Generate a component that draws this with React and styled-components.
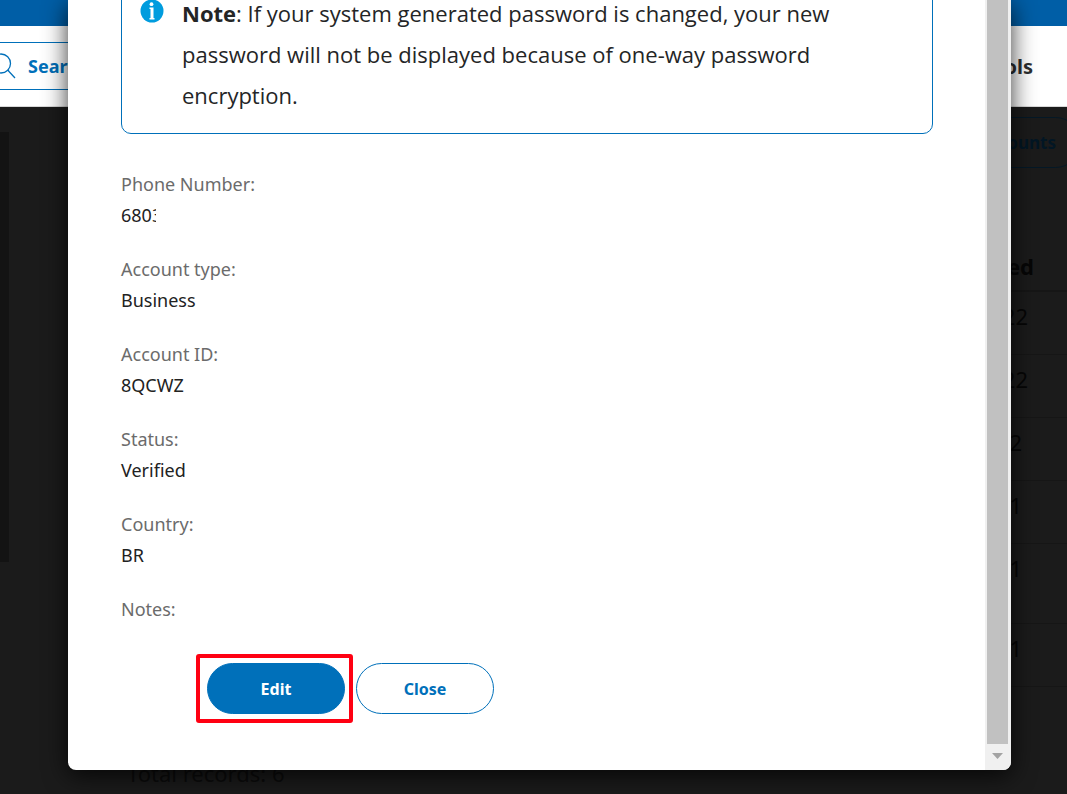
import React from "react";
import styled, { createGlobalStyle } from "styled-components";

const GlobalStyle = createGlobalStyle`
  *, *::before, *::after { box-sizing: border-box; }
  body { margin: 0; background: #1b1b1b; font-family: "Noto Sans", "Open Sans", sans-serif; color: #2c2e2f; }
  button, input { font-family: inherit; }
`;

const Page = styled.div`
  position: relative;
  min-height: 100vh;
  overflow: hidden;
  display: flex;
  flex-direction: column;
`;

const TopBar = styled.div`
  height: 26px;
  background: #005ea6;
`;

const NavBar = styled.header`
  display: flex;
  align-items: center;
  justify-content: space-between;
  height: 81px;
  padding-right: 34px;
  background: #fff;
  border-bottom: 1px solid #d8d8d8;
`;

const SearchBox = styled.label`
  display: flex;
  align-items: center;
  gap: 12px;
  width: 280px;
  height: 48px;
  border: 1px solid #0070ba;
  border-width: 1px 0;
`;

const SearchIcon = styled.svg`
  width: 28px;
  height: 28px;
  margin-left: -12px;
`;

const SearchInput = styled.input`
  flex: 1;
  min-width: 0;
  padding: 0;
  border: 0;
  background: none;
  font-size: 18px;
  font-weight: 700;
  color: #0070ba;
  &::placeholder { color: #0070ba; opacity: 1; }
`;

const NavLink = styled.a`
  font-size: 20px;
  font-weight: 700;
  color: #2c2e2f;
  text-decoration: none;
`;

const Backdrop = styled.main`
  flex: 1;
  display: flex;
  background: #1b1b1b;
`;

const SidePanel = styled.aside`
  width: 9px;
  height: 430px;
  margin-top: 25px;
  background: #131313;
`;

const Records = styled.section`
  flex: 1;
  display: flex;
  flex-direction: column;
  padding-left: 118px;
`;

const AccountsButton = styled.button`
  align-self: flex-end;
  height: 51px;
  margin: 10px -14px 73px 0;
  padding: 0 24px;
  border: 1px solid #041826;
  border-radius: 26px;
  background: none;
  font-size: 17px;
  font-weight: 700;
  color: #021624;
`;

const RecordTable = styled.table`
  width: 100%;
  border-collapse: collapse;
  font-size: 22px;
  color: #060606;
`;

const HeadCell = styled.th`
  height: 50px;
  padding: 0 33px 0 0;
  border-bottom: 2px solid #161616;
  text-align: right;
`;

const RecordCell = styled.td`
  height: ${(p) => (p.$tall ? 80 : 63)}px;
  padding: 8px ${(p) => (p.$inset ? 45 : 39)}px 0 0;
  border-bottom: 1px solid #161616;
  text-align: right;
  vertical-align: top;
  line-height: 32px;
`;

const Total = styled.p`
  margin: 70px 0 0;
  font-size: 22px;
  line-height: 32px;
  color: #0c0c0c;
`;

const ModalLayer = styled.div`
  position: absolute;
  inset: 0 0 auto;
  padding: 0 56px 24px 68px;
`;

const Modal = styled.div`
  display: flex;
  border-radius: 0 0 8px 8px;
  background: #fff;
  box-shadow: 0 5px 24px rgba(0, 0, 0, 0.8);
  overflow: hidden;
`;

const ModalContent = styled.div`
  flex: 1;
  padding: 0 52px 47px 53px;
`;

const Notice = styled.div`
  display: flex;
  gap: 18px;
  margin-top: -40px;
  padding: 32px 90px 17px 18px;
  border: 1px solid #0070ba;
  border-radius: 10px;
`;

const InfoIcon = styled.svg`
  flex: none;
  width: 24px;
  height: 24px;
  margin-top: 6px;
`;

const NoticeText = styled.p`
  margin: 0;
  font-family: "Open Sans", "Noto Sans", sans-serif;
  font-size: 22px;
  line-height: 41px;
  color: #242526;
`;

const FieldList = styled.dl`
  display: flex;
  flex-direction: column;
  gap: 23px;
  margin: 35px 0 29px;
  font-size: 18px;
  line-height: 31px;
`;

const FieldLabel = styled.dt`
  color: #6b6b6b;
`;

const FieldValue = styled.dd`
  margin: 0;
  color: #222;
`;

const ClippedValue = styled.span`
  display: block;
  width: 35px;
  overflow: hidden;
`;

const Actions = styled.div`
  display: flex;
  align-items: center;
  gap: 3px;
  padding-left: 75px;
`;

const Highlight = styled.div`
  padding: 5px 4px 5px 7px;
  border: 4px solid #ff0012;
  border-radius: 3px;
`;

const ActionButton = styled.button`
  display: block;
  width: 138px;
  height: 51px;
  padding: 0;
  border: 1px solid #0070ba;
  border-radius: 26px;
  background: ${(p) => (p.$primary ? "#0070ba" : "#fff")};
  color: ${(p) => (p.$primary ? "#fff" : "#0070ba")};
  font-size: 16px;
  font-weight: 700;
`;

const ScrollTrack = styled.div`
  display: flex;
  flex-direction: column;
  width: 26px;
  padding: 0 3px 0 2px;
  background: #f0f0f0;
`;

const ScrollThumb = styled.div`
  flex: 1;
  background: #c1c1c1;
`;

const ScrollArrow = styled.svg`
  width: 21px;
  height: 26px;
`;

const fields = [
  { label: "Phone Number:", value: "6803", clipped: true },
  { label: "Account type:", value: "Business" },
  { label: "Account ID:", value: "8QCWZ" },
  { label: "Status:", value: "Verified" },
  { label: "Country:", value: "BR" },
  { label: "Notes:" },
];

const records = [
  { date: "22" },
  { date: "22" },
  { date: "2", inset: true },
  { date: "1", inset: true },
  { date: "1", inset: true, tall: true },
  { date: "1", inset: true },
];

export default function App() {
  return (
    <Page>
      <GlobalStyle />
      <TopBar />
      <NavBar>
        <SearchBox>
          <SearchIcon viewBox="0 0 28 28" fill="none" stroke="#0070ba" strokeWidth="1.3" aria-hidden="true">
            <circle cx="13" cy="11.500" r="9.5" />
            <path d="M20.500 17.500v1.500L27 26" />
          </SearchIcon>
          <SearchInput type="search" placeholder="Search" aria-label="Search" />
        </SearchBox>
        <NavLink href="#tools">Tools</NavLink>
      </NavBar>
      <Backdrop>
        <SidePanel />
        <Records>
          <AccountsButton type="button">Accounts</AccountsButton>
          <RecordTable>
            <thead>
              <tr>
                <HeadCell scope="col">ed</HeadCell>
              </tr>
            </thead>
            <tbody>
              {records.map((r, i) => (
                <tr key={i}>
                  <RecordCell $inset={r.inset} $tall={r.tall}>{r.date}</RecordCell>
                </tr>
              ))}
            </tbody>
          </RecordTable>
          <Total>Total records: 6</Total>
        </Records>
      </Backdrop>
      <ModalLayer>
        <Modal role="dialog" aria-label="Account details">
          <ModalContent>
            <Notice>
              <InfoIcon viewBox="0 0 24 24" aria-hidden="true">
                <circle cx="12" cy="12" r="11.5" fill="#009cde" />
                <circle cx="11.500" cy="5.200" r="1.900" fill="#fff" />
                <path d="M9.500 8.500h4v10.500h1v1.500h-5V19h1v-9h-1z" fill="#fff" />
              </InfoIcon>
              <NoticeText>
                <strong>Note</strong>: If your system generated password is changed, your new password will not be
                displayed because of one-way password encryption.
              </NoticeText>
            </Notice>
            <FieldList>
              {fields.map((f) => (
                <div key={f.label}>
                  <FieldLabel>{f.label}</FieldLabel>
                  {f.value && (
                    <FieldValue>{f.clipped ? <ClippedValue>{f.value}</ClippedValue> : f.value}</FieldValue>
                  )}
                </div>
              ))}
            </FieldList>
            <Actions>
              <Highlight>
                <ActionButton type="button" $primary>Edit</ActionButton>
              </Highlight>
              <ActionButton type="button">Close</ActionButton>
            </Actions>
          </ModalContent>
          <ScrollTrack>
            <ScrollThumb />
            <ScrollArrow viewBox="0 0 21 26" aria-hidden="true">
              <path d="M5 9h11l-5.500 6z" fill="#a3a3a3" />
            </ScrollArrow>
          </ScrollTrack>
        </Modal>
      </ModalLayer>
    </Page>
  );
}
